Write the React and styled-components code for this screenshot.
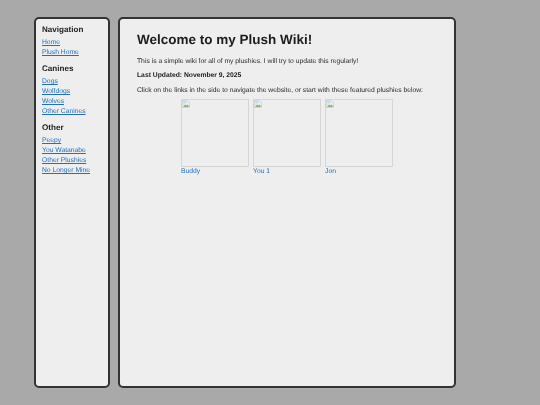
import React from 'react';
import styled, { createGlobalStyle } from 'styled-components';

const GlobalStyle = createGlobalStyle`
  html, body {
    margin: 0;
    padding: 0;
    height: 405px;
    overflow: hidden;
    background: #a9a9a9;
    font-family: "Liberation Sans", Arial, sans-serif;
    text-rendering: geometricPrecision;
  }
`;

const Page = styled.div`
  display: flex;
  gap: 8px;
  width: 422px;
  height: 371px;
  padding: 17px 0 17px 34px;
  filter: blur(0.28px);
`;

const Panel = styled.div`
  box-sizing: border-box;
  height: 371px;
  background: #eeeeee;
  border: 2px solid #333333;
  border-radius: 5px;
`;

const Sidebar = styled(Panel)`
  width: 76px;
  flex: none;
  padding: 5px 6px;
`;

const Main = styled(Panel)`
  flex: 1;
  padding: 11px 17px;
  color: #222222;
`;

const NavHeading = styled.div`
  font-size: 8.1px;
  font-weight: bold;
  line-height: 12px;
  color: #222222;
  margin: ${(props) => (props.$first ? '0' : '5px')} 0 2px;
`;

const NavLink = styled.a`
  display: block;
  font-size: 6.75px;
  line-height: 10px;
  color: #1f6fc4;
  text-decoration: underline;
  white-space: nowrap;
`;

const Title = styled.h1`
  font-size: 13.5px;
  line-height: 20px;
  font-weight: bold;
  color: #1c1c1c;
  margin: 0 0 7px;
`;

const Para = styled.p`
  font-size: 6.75px;
  line-height: 10px;
  margin: 0 0 4.3px;
  color: #2a2a2a;
  white-space: nowrap;
`;

const StrongPara = styled(Para)`
  font-weight: bold;
  color: #1c1c1c;
`;

const Gallery = styled.div`
  display: flex;
  gap: 4px;
  margin: -1px 0 0 44px;
`;

const Plush = styled.a`
  display: block;
  width: 68px;
  font-size: 6.75px;
  line-height: 10px;
  color: #1f6fc4;
  text-decoration: none;
`;

const Frame = styled.div`
  box-sizing: border-box;
  width: 68px;
  height: 68px;
  border: 1px solid #d6d6d6;
`;

const BrokenIcon = () => (
  <svg width="8" height="8" viewBox="0 0 16 16" style={{ display: 'block' }}>
    <path d="M1 1h10l4 4v10H1z" fill="#e8edf1" stroke="#c4c4c4" strokeWidth="1.2" />
    <path d="M2 14l4-5 3 2 3-2 2 5z" fill="#8ab57c" />
    <path d="M2.5 2.5h6v4h-6z" fill="#c3d6ea" />
  </svg>
);

const sections = [
  { title: 'Navigation', links: ['Home', 'Plush Home'] },
  { title: 'Canines', links: ['Dogs', 'Wolfdogs', 'Wolves', 'Other Canines'] },
  { title: 'Other', links: ['Peepy', 'You Watanabe', 'Other Plushies', 'No Longer Mine'] },
];

const featured = ['Buddy', 'You 1', 'Jon'];

const App = () => (
  <>
    <GlobalStyle />
    <Page>
      <Sidebar>
        {sections.map((section, i) => (
          <div key={section.title}>
            <NavHeading $first={i === 0}>{section.title}</NavHeading>
            {section.links.map((link) => (
              <NavLink key={link} href="#">{link}</NavLink>
            ))}
          </div>
        ))}
      </Sidebar>
      <Main>
        <Title>Welcome to my Plush Wiki!</Title>
        <Para>This is a simple wiki for all of my plushies. I will try to update this regularly!</Para>
        <StrongPara>Last Updated: November 9, 2025</StrongPara>
        <Para>Click on the links in the side to navigate the website, or start with these featured plushies below:</Para>
        <Gallery>
          {featured.map((name) => (
            <Plush key={name} href="#">
              <Frame><BrokenIcon /></Frame>
              {name}
            </Plush>
          ))}
        </Gallery>
      </Main>
    </Page>
  </>
);

export default App;
